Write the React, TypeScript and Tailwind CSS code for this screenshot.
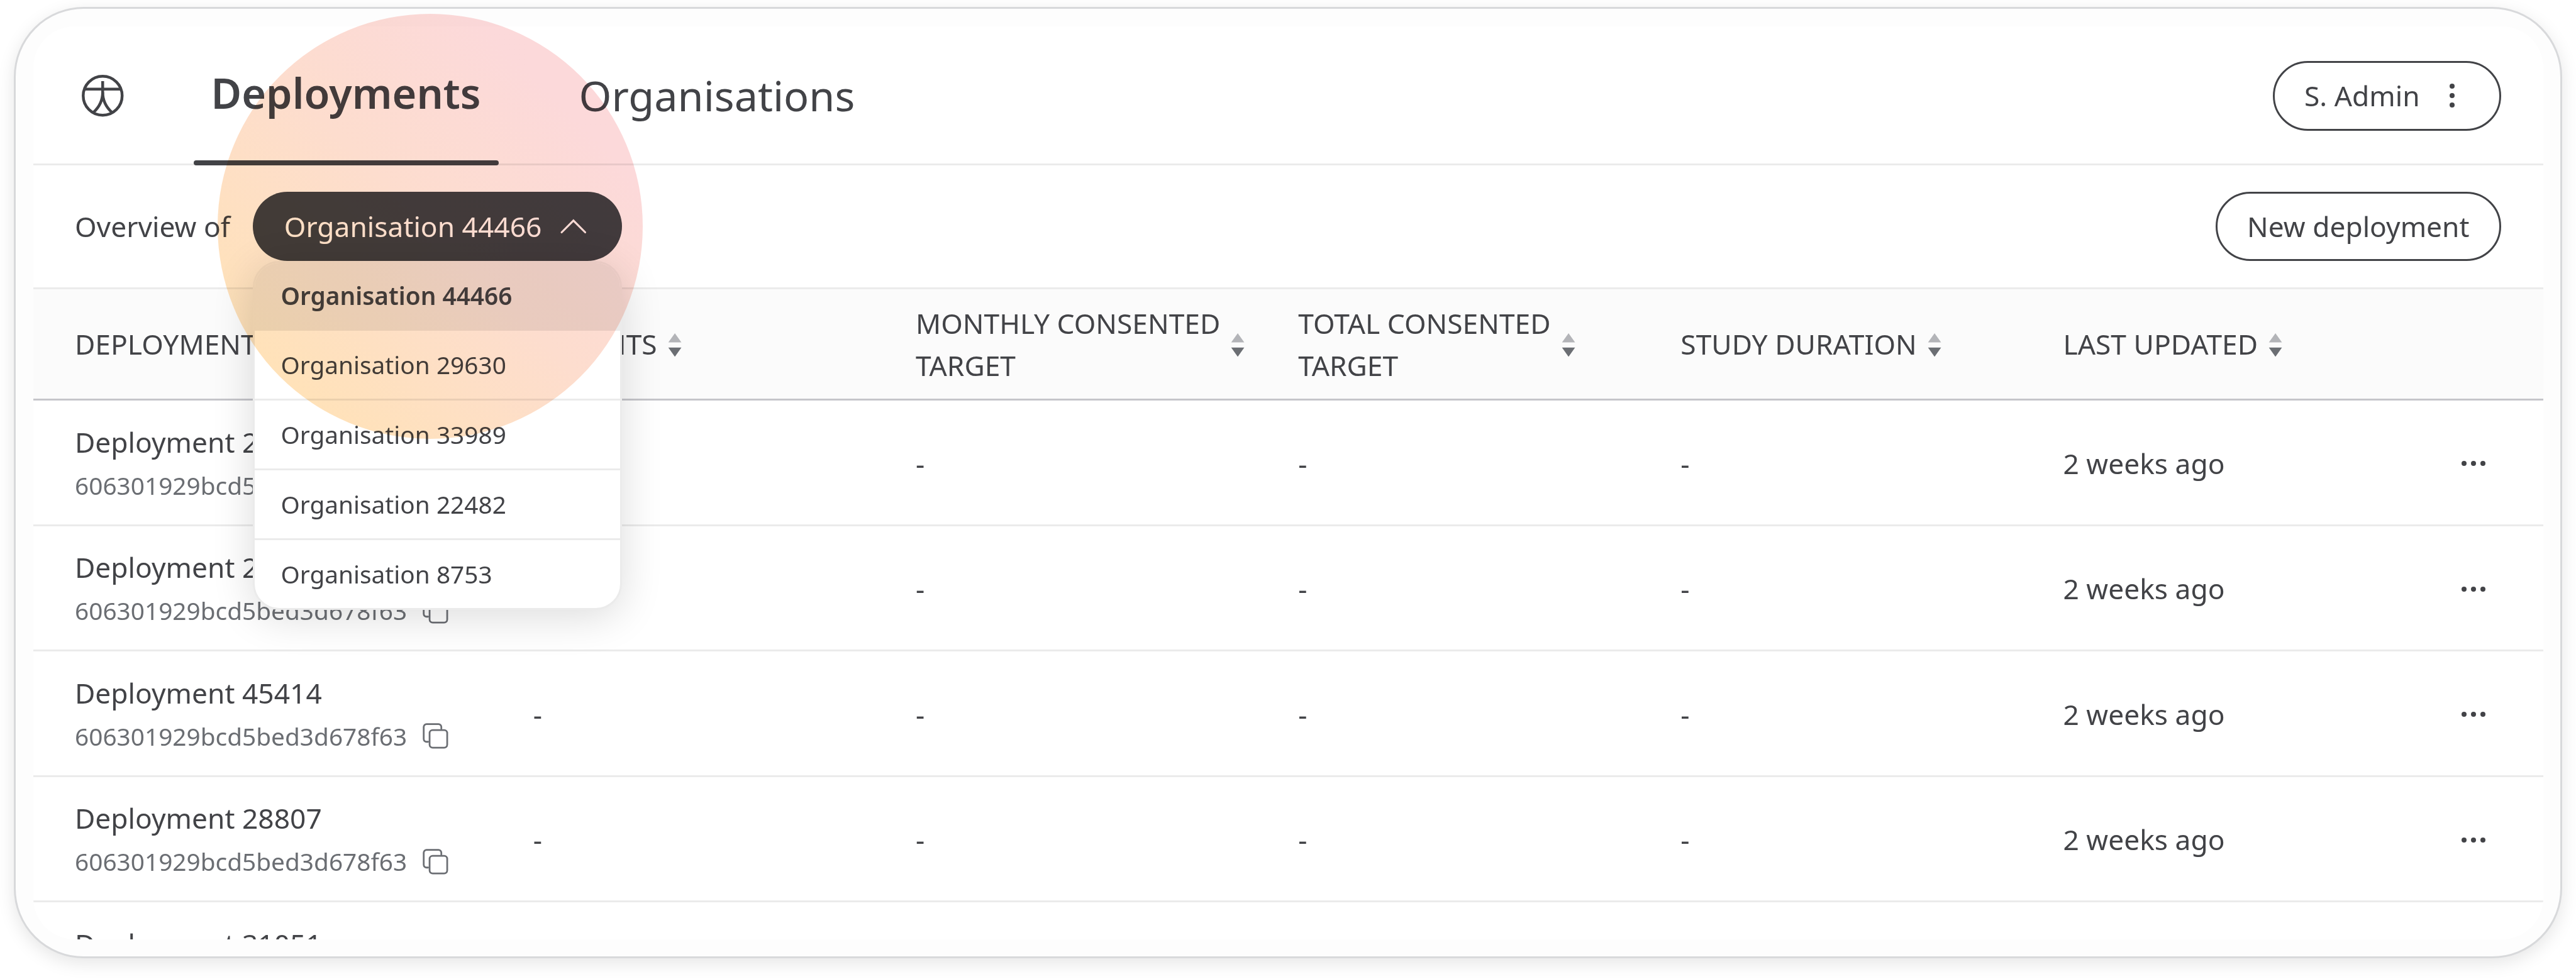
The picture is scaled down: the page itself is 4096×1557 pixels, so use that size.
import React from "react";

const organisations = [
  "Organisation 44466",
  "Organisation 29630",
  "Organisation 33989",
  "Organisation 22482",
  "Organisation 8753",
];

const deployments = [
  "Deployment 28190",
  "Deployment 27316",
  "Deployment 45414",
  "Deployment 28807",
  "Deployment 31051",
];

const deploymentId = "606301929bcd5bed3d678f63";

const columns = [
  ["DEPLOYMENT"],
  ["PATIENTS"],
  ["MONTHLY CONSENTED", "TARGET"],
  ["TOTAL CONSENTED", "TARGET"],
  ["STUDY DURATION"],
  ["LAST UPDATED"],
];

const gridColumns =
  "grid grid-cols-[728.85px_608.16px_608.16px_608.16px_608.16px_1fr] items-center pl-[66.5px]";

function LogoIcon() {
  return (
    <svg viewBox="0 0 96 96" className="size-[66.5px]" fill="none" stroke="currentColor" strokeWidth="6.5">
      <circle cx="48" cy="48" r="44.7" />
      <path d="M7 33H89" />
      <path d="M48 14.5V40C48 58 40 74 27 86" />
      <path d="M48 40C48 58 56 74 69 86" />
    </svg>
  );
}

function CopyIcon() {
  return (
    <svg viewBox="0 0 60 60" className="size-[41.5px]" fill="none" stroke="currentColor" strokeWidth="4">
      <rect x="16" y="16" width="40.5" height="40.5" rx="7" />
      <path d="M12.5 43H9A6.5 6.5 0 0 1 2.5 36.5V9A6.5 6.5 0 0 1 9 2.5H36.5A6.5 6.5 0 0 1 43 9V13" strokeLinecap="round" />
    </svg>
  );
}

function SortIcon() {
  return (
    <svg viewBox="0 0 32 54" className="mt-[2px] h-[37.4px] w-[22.2px] shrink-0">
      <path d="M16 0L31 21H1Z" fill="#b3b4b8" />
      <path d="M1 33H31L16 54Z" fill="#6b6e73" />
    </svg>
  );
}

function Dots({ vertical = false }: { vertical?: boolean }) {
  return (
    <span className={vertical ? "flex flex-col gap-[7px]" : "flex gap-[7px]"}>
      <i className="size-2 rounded-full bg-[#424347]" />
      <i className="size-2 rounded-full bg-[#424347]" />
      <i className="size-2 rounded-full bg-[#424347]" />
    </span>
  );
}

function Header() {
  return (
    <header className="flex h-[221.7px] shrink-0 items-center pr-[66.5px] pl-[77.6px] shadow-[inset_0_-3px_0_#ebebeb]">
      <LogoIcon />
      <nav className="ml-[111px] flex h-full flex-1 text-[66.51px]">
        <a className="relative flex h-full w-[485px] items-center justify-center border-b-8 border-transparent font-semibold">
          Deployments
          <span className="absolute inset-x-0 -bottom-2 h-2 rounded-full bg-[#424347]" />
        </a>
        <a className="ml-32 flex h-full items-center">Organisations</a>
      </nav>
      <button className="flex h-[110.85px] w-[363px] items-center rounded-full border-3 border-[#424347] pl-[47px]">
        S. Admin
        <span className="ml-auto pr-[71px]">
          <Dots vertical />
        </span>
      </button>
    </header>
  );
}

function OrganisationSelect() {
  return (
    <div className="relative z-10 ml-9 h-[110.85px] w-[587.5px]">
      <button className="flex h-full w-full items-center justify-between rounded-full bg-[#424347] pr-[57px] pl-[49.9px] text-white">
        Organisation 44466
        <svg viewBox="0 0 60 34" className="h-[23.6px] w-[41.6px]" fill="none" stroke="currentColor" strokeWidth="4.5" strokeLinecap="round">
          <path d="M3 31L30 4L57 31" />
        </svg>
      </button>
      <ul className="absolute top-full left-0 w-full overflow-hidden rounded-[42px] border-3 border-[#ebebeb] bg-white text-[38.8px] shadow-[0_11px_66px_rgba(0,0,0,0.14)]">
        {organisations.map((name, i) => (
          <li
            key={name}
            className={
              i === 0
                ? "flex h-[107.9px] items-center bg-[#ebebeb] pb-1 pl-[41.5px] font-semibold"
                : i === organisations.length - 1
                  ? "flex h-[107.9px] items-center pl-[41.5px]"
                  : "flex h-[110.85px] items-center border-b-3 border-[#ebebeb] pl-[41.5px]"
            }
          >
            {name}
          </li>
        ))}
      </ul>
    </div>
  );
}

function Toolbar() {
  return (
    <div className="flex h-[196.77px] shrink-0 items-center border-b-3 border-[#ebebeb] px-[66.5px]">
      <span>Overview of</span>
      <OrganisationSelect />
      <button className="ml-auto h-[110.85px] w-[454.5px] rounded-full border-3 border-[#424347]">
        New deployment
      </button>
    </div>
  );
}

function TableHead() {
  return (
    <div className={`${gridColumns} h-[177.36px] shrink-0 bg-[#fbfbfb] pb-[2px] shadow-[inset_0_-3px_0_#c5c5ca]`}>
      {columns.map((lines) => (
        <div key={lines.join(" ")} className="flex items-center gap-[17px] leading-[66.5px] whitespace-nowrap">
          <span>
            {lines.map((line) => (
              <span key={line} className="block">{line}</span>
            ))}
          </span>
          {lines[0] !== "DEPLOYMENT" && <SortIcon />}
        </div>
      ))}
    </div>
  );
}

function Row({ name }: { name: string }) {
  return (
    <div className={`${gridColumns} h-[199.54px] shrink-0 shadow-[inset_0_-3px_0_#ebebeb]`}>
      <div className="pt-[3px]">
        <div className="leading-[66.5px]">{name}</div>
        <div className="flex h-[71px] items-center gap-[25px] text-[38.8px] text-[#6b6e73]">
          {deploymentId}
          <CopyIcon />
        </div>
      </div>
      <span>-</span>
      <span>-</span>
      <span>-</span>
      <span>-</span>
      <div className="flex items-center justify-between pr-[92px]">
        2 weeks ago
        <Dots />
      </div>
    </div>
  );
}

export default function App() {
  return (
    <div className="h-[1557px] w-[4096px] overflow-hidden bg-white pt-[11px] pl-[22px] font-['Noto_Sans',sans-serif] text-[44.34px] text-[#424347]">
      <div className="relative h-[1513px] w-[4052px] rounded-[111px] border-3 border-[#d8d9db] bg-[#fdfdfd] p-[27.5px] shadow-[0_8px_28px_rgba(0,0,0,0.1)]">
        <main className="flex h-full flex-col overflow-hidden rounded-[66px] bg-white">
          <Header />
          <Toolbar />
          <TableHead />
          {deployments.map((name) => (
            <Row key={name} name={name} />
          ))}
        </main>
        <div className="pointer-events-none absolute top-[8px] left-[321px] z-20 size-[676px] rounded-full bg-linear-to-tr from-[#ffe2b9] from-15% via-[#fdddce] via-50% to-[#fcd9da] to-80% mix-blend-multiply" />
      </div>
    </div>
  );
}
